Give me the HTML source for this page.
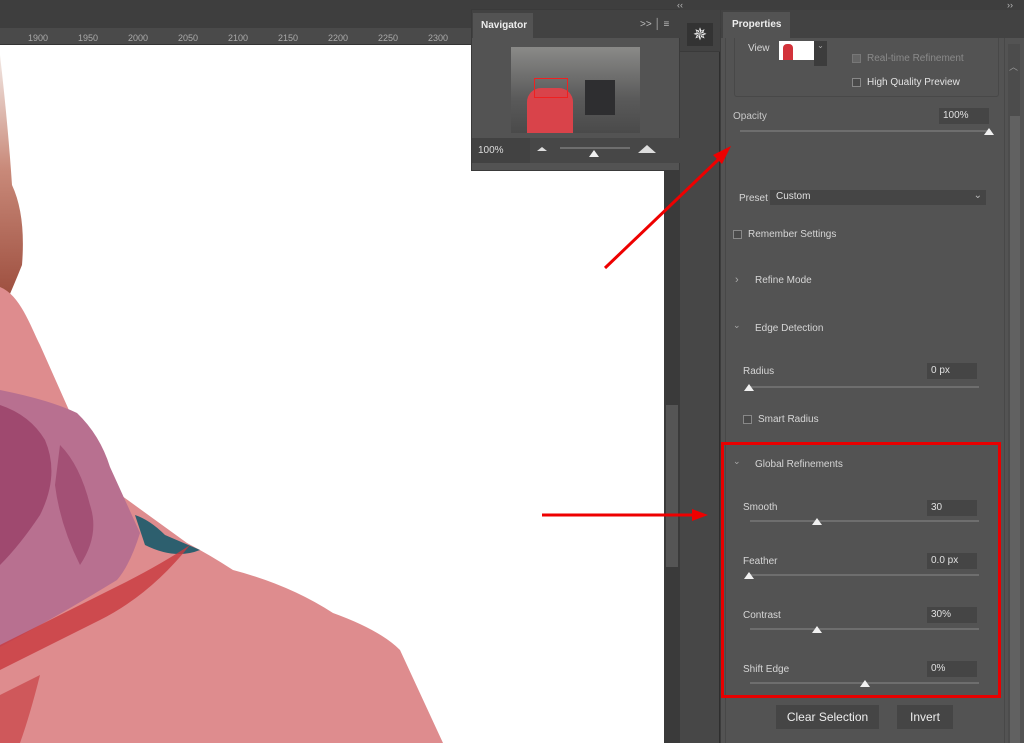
<!DOCTYPE html>
<html><head><meta charset="utf-8"><style>
*{margin:0;padding:0;box-sizing:border-box}
body{width:1024px;height:743px;overflow:hidden;background:#3c3c3c;font-family:"Liberation Sans",sans-serif;font-size:10px;color:#d8d8d8;position:relative}
.a{position:absolute}
.lbl{position:absolute;font-size:10px;color:#d6d6d6}
.inp{position:absolute;background:#454545;height:16px;width:50px;font-size:10px;color:#e0e0e0;padding:2px 4px}
.trk{position:absolute;height:2px;background:#6e6e6e}
.th{position:absolute;width:0;height:0;border-left:5px solid transparent;border-right:5px solid transparent;border-bottom:7px solid #f0f0f0}
.cb{position:absolute;width:9px;height:9px;border:1px solid #888;background:#4a4a4a}
.chev{position:absolute;color:#aaa;font-size:11px}
</style></head><body>
<div class="a" style="left:0;top:0;width:1024px;height:28px;background:#3e3e3e"></div>
<div class="a" style="left:677px;top:0;color:#bbb;font-size:9px">‹‹</div>
<div class="a" style="left:1007px;top:0;color:#bbb;font-size:9px">››</div>
<div class="a" style="left:0;top:28px;width:472px;height:17px;background:#4a4a4a;border-bottom:1px solid #333"></div>
<div class="a" style="left:0;top:33px;width:472px;height:12px;font-size:9px;color:#aaa">
<span class="a" style="left:28px">1900</span><span class="a" style="left:78px">1950</span><span class="a" style="left:128px">2000</span><span class="a" style="left:178px">2050</span><span class="a" style="left:228px">2100</span><span class="a" style="left:278px">2150</span><span class="a" style="left:328px">2200</span><span class="a" style="left:378px">2250</span><span class="a" style="left:428px">2300</span>
</div>
<div class="a" style="left:0;top:45px;width:664px;height:698px;background:#fff"></div>
<svg class="a" style="left:0;top:45px" width="664" height="698">
<defs><linearGradient id="sk" x1="0" y1="0" x2="0" y2="1"><stop offset="0" stop-color="#f2e8e4"/><stop offset="0.45" stop-color="#c98a7a"/><stop offset="1" stop-color="#9a4a3a"/></linearGradient></defs>
<path d="M0,10 Q8,80 12,140 Q26,170 22,220 Q14,240 6,258 L0,262Z" fill="url(#sk)"/>
<path d="M0,242 C20,250 30,280 40,300 L100,435 L187,498 Q210,510 233,525 Q290,540 333,568 Q380,585 400,605 L443,698 L0,698Z" fill="#de8c8e"/>
<path d="M0,345 Q50,355 77,368 Q100,390 110,422 L140,488 Q130,520 117,535 Q60,570 0,602Z" fill="#b87090"/>
<path d="M0,360 Q30,370 45,395 Q60,430 40,470 Q20,500 0,520Z" fill="#8e2f5a" opacity="0.6"/>
<path d="M60,400 Q80,420 90,460 Q100,490 80,520 Q60,480 55,440Z" fill="#8e2f5a" opacity="0.5"/>
<path d="M135,470 Q150,475 165,490 L200,505 Q175,515 145,500Z" fill="#2d5f6e"/>
<path d="M0,600 Q60,570 120,540 Q160,520 190,500 Q150,550 100,575 Q40,605 0,625Z" fill="#c83a3e" opacity="0.8"/>
<path d="M0,650 Q20,640 40,630 Q30,670 20,698 L0,698Z" fill="#c43538" opacity="0.6"/>
</svg>
<div class="a" style="left:471px;top:9px;width:209px;height:162px;background:#535353;border:1px solid #3a3a3a"></div>
<div class="a" style="left:472px;top:10px;width:208px;height:28px;background:#424242"></div>
<div class="a" style="left:473px;top:13px;width:60px;height:25px;background:#535353;font-weight:bold;color:#eee;font-size:10px;padding:7px 8px">Navigator</div>
<div class="a" style="left:640px;top:19px;color:#bbb;font-size:10px">&gt;&gt; │ ≡</div>
<div class="a" style="left:511px;top:47px;width:129px;height:86px;background:linear-gradient(#8a8a88,#5a5a5a 60%,#4a4a4a)"></div>
<div class="a" style="left:527px;top:88px;width:46px;height:45px;background:#d9434a;border-radius:14px 14px 0 0"></div>
<div class="a" style="left:585px;top:80px;width:30px;height:35px;background:#2e2e30"></div>
<div class="a" style="left:534px;top:78px;width:34px;height:20px;border:1px solid #f02020"></div>
<div class="a" style="left:472px;top:138px;width:208px;height:25px;background:#474747"></div>
<div class="a" style="left:472px;top:138px;width:58px;height:25px;background:#424242;color:#ddd;padding:7px 6px">100%</div>
<div class="a" style="left:537px;top:147px;border-left:5px solid transparent;border-right:5px solid transparent;border-bottom:4px solid #ddd"></div>
<div class="trk" style="left:560px;top:147px;width:70px"></div>
<div class="th" style="left:589px;top:150px"></div>
<div class="a" style="left:638px;top:145px;border-left:9px solid transparent;border-right:9px solid transparent;border-bottom:8px solid #ddd"></div>
<div class="a" style="left:664px;top:171px;width:16px;height:572px;background:#3a3a3a"></div>
<div class="a" style="left:666px;top:405px;width:12px;height:162px;background:#555"></div>
<div class="a" style="left:680px;top:10px;width:40px;height:733px;background:#474747;border-right:1px solid #2e2e2e"></div>
<div class="a" style="left:680px;top:10px;width:40px;height:42px;background:#424242;border-bottom:1px solid #3a3a3a"></div>
<div class="a" style="left:687px;top:23px;width:26px;height:23px;background:#333;color:#eee;font-size:17px;text-align:center;line-height:23px">✵</div>
<div class="a" style="left:721px;top:10px;width:303px;height:733px;background:#535353"></div>
<div class="a" style="left:721px;top:10px;width:303px;height:28px;background:#424242"></div>
<div class="a" style="left:723px;top:12px;width:67px;height:26px;background:#535353;font-weight:bold;color:#eee;padding:7px 9px">Properties</div>
<div class="a" style="left:725px;top:38px;width:280px;height:705px;background:#535353;border-left:1px solid #484848;border-right:1px solid #484848"></div>
<div class="a" style="left:1008px;top:44px;width:12px;height:699px;background:#4c4c4c"></div>
<div class="a" style="left:1009px;top:60px;color:#999;font-size:9px">︿</div>
<div class="a" style="left:1010px;top:116px;width:10px;height:627px;background:#616161"></div>
<div class="a" style="left:734px;top:38px;width:265px;height:59px;border:1px solid #484848;border-top:none;border-radius:0 0 3px 3px"></div>
<div class="lbl" style="left:748px;top:43px">View</div>
<div class="a" style="left:779px;top:41px;width:35px;height:19px;background:#fff"></div>
<div class="a" style="left:783px;top:44px;width:10px;height:16px;background:#d2323a;border-radius:4px 4px 0 0"></div>
<div class="a" style="left:814px;top:41px;width:13px;height:25px;background:#3c3c3c;color:#aaa;font-size:8px;text-align:center">⌄</div>
<div class="cb" style="left:852px;top:54px;background:#666;border-color:#777"></div>
<div class="lbl" style="left:867px;top:53px;color:#8a8a8a">Real-time Refinement</div>
<div class="cb" style="left:852px;top:78px"></div>
<div class="lbl" style="left:867px;top:77px;color:#e4e4e4">High Quality Preview</div>
<div class="lbl" style="left:733px;top:111px;color:#c8c8c8">Opacity</div>
<div class="inp" style="left:939px;top:108px">100%</div>
<div class="trk" style="left:740px;top:130px;width:251px"></div>
<div class="th" style="left:984px;top:128px"></div>
<div class="lbl" style="left:739px;top:193px">Preset</div>
<div class="a" style="left:770px;top:190px;width:216px;height:15px;background:#454545;color:#e0e0e0;padding:1px 6px">Custom<span style="position:absolute;right:4px;top:0;color:#bbb">⌄</span></div>
<div class="cb" style="left:733px;top:230px"></div>
<div class="lbl" style="left:748px;top:229px">Remember Settings</div>
<div class="chev" style="left:735px;top:274px">›</div>
<div class="lbl" style="left:755px;top:275px">Refine Mode</div>
<div class="chev" style="left:733px;top:320px;font-size:9px">⌄</div>
<div class="lbl" style="left:755px;top:323px">Edge Detection</div>
<div class="lbl" style="left:743px;top:366px">Radius</div>
<div class="inp" style="left:927px;top:363px">0 px</div>
<div class="trk" style="left:750px;top:386px;width:229px"></div>
<div class="th" style="left:744px;top:384px"></div>
<div class="cb" style="left:743px;top:415px"></div>
<div class="lbl" style="left:758px;top:414px">Smart Radius</div>
<div class="chev" style="left:733px;top:456px;font-size:9px">⌄</div>
<div class="lbl" style="left:755px;top:459px">Global Refinements</div>
<div class="lbl" style="left:743px;top:502px">Smooth</div>
<div class="inp" style="left:927px;top:500px">30</div>
<div class="trk" style="left:750px;top:520px;width:229px"></div>
<div class="th" style="left:812px;top:518px"></div>
<div class="lbl" style="left:743px;top:556px">Feather</div>
<div class="inp" style="left:927px;top:553px">0.0 px</div>
<div class="trk" style="left:750px;top:574px;width:229px"></div>
<div class="th" style="left:744px;top:572px"></div>
<div class="lbl" style="left:743px;top:610px">Contrast</div>
<div class="inp" style="left:927px;top:607px">30%</div>
<div class="trk" style="left:750px;top:628px;width:229px"></div>
<div class="th" style="left:812px;top:626px"></div>
<div class="lbl" style="left:743px;top:664px">Shift Edge</div>
<div class="inp" style="left:927px;top:661px">0%</div>
<div class="trk" style="left:750px;top:682px;width:229px"></div>
<div class="th" style="left:860px;top:680px"></div>
<div class="a" style="left:776px;top:705px;width:103px;height:24px;background:#454545;color:#eee;font-size:12px;text-align:center;line-height:24px">Clear Selection</div>
<div class="a" style="left:897px;top:705px;width:56px;height:24px;background:#454545;color:#eee;font-size:12px;text-align:center;line-height:24px">Invert</div>
<div class="a" style="left:721px;top:442px;width:280px;height:256px;border:3px solid #e80000"></div>
<svg class="a" style="left:0;top:0" width="1024" height="743">
<line x1="605" y1="268" x2="722" y2="156" stroke="#e00" stroke-width="3"/>
<polygon points="731,146 713,155 722,164" fill="#e00"/>
<line x1="542" y1="515" x2="694" y2="515" stroke="#e00" stroke-width="3"/>
<polygon points="708,515 692,509 692,521" fill="#e00"/>
</svg>
</body></html>
